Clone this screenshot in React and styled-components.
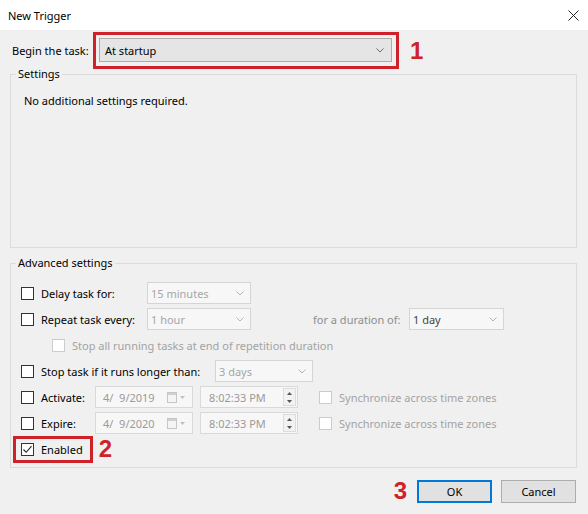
import styled, { createGlobalStyle } from 'styled-components';

const GlobalStyle = createGlobalStyle`
    body {
        margin: 0;
        font-family: 'Noto Sans', 'Open Sans', sans-serif;
        font-size: 11px;
        color: #000;
    }
`;

const RED = '#cf2128';

const Window = styled.div`
    width: 588px;
    height: 514px;
    background-color: #f0f0f0;
    display: flex;
    flex-direction: column;
    overflow: hidden;
`;

const TitleBar = styled.div`
    height: 30px;
    flex-shrink: 0;
    background-color: #fff;
    display: flex;
    align-items: center;
    justify-content: space-between;
    padding: 0 9px 0 8px;
    font-size: 11px;
`;

const Body = styled.div`
    flex: 1;
    display: flex;
    flex-direction: column;
    padding: 0 11px 0 10px;
`;

const BeginRow = styled.div`
    display: flex;
    align-items: center;
    margin-top: 2px;
    padding-left: 2px;
`;

const BeginLabel = styled.span`
    width: 81px;
`;

const RedBox = styled.div`
    display: flex;
    align-items: center;
    border: 3px solid ${RED};
    padding: ${(p) => p.$pad || '3px 4px 4px 3px'};
    margin-left: ${(p) => p.$shift || '0'};
    height: ${(p) => p.$height || 'auto'};
    box-sizing: border-box;
`;

const Marker = styled.span`
    color: ${RED};
    font-family: 'Liberation Sans', Arial, sans-serif;
    font-weight: bold;
    font-size: ${(p) => p.$size || '24px'};
    line-height: 1;
    margin-left: ${(p) => p.$left || '0'};
    margin-right: ${(p) => p.$right || '0'};
`;

const Select = styled.div`
    width: 293px;
    height: 24px;
    box-sizing: border-box;
    background-color: #e5e5e5;
    border: 1px solid #acacac;
    display: flex;
    align-items: center;
    justify-content: space-between;
    padding: 0 7px 0 5px;
`;

const Group = styled.fieldset`
    margin: ${(p) => p.$top || '0'} 0 0 0;
    padding: 0;
    border: 1px solid #dcdcdc;
    height: ${(p) => p.$height};
    box-sizing: border-box;
    min-width: 0;
`;

const Legend = styled.legend`
    margin-left: 5px;
    padding: 0 2px;
    line-height: 10px;
    font-size: 11px;
`;

const SettingsText = styled.div`
    padding: 15px 0 0 13px;
    line-height: 14px;
`;

const Rows = styled.div`
    display: flex;
    flex-direction: column;
    padding: 12px 0 0 10px;
`;

const Row = styled.div`
    display: flex;
    align-items: center;
    height: 26px;
    padding-left: ${(p) => p.$indent || '0'};
`;

const CheckLabel = styled.label`
    display: flex;
    align-items: center;
    gap: 7px;
    width: ${(p) => p.$width || 'auto'};
    color: ${(p) => (p.$disabled ? '#a3a3a3' : '#000')};
    flex-shrink: 0;
`;

const Box = styled.span`
    width: 13px;
    height: 13px;
    box-sizing: border-box;
    border: 1px solid ${(p) => (p.$disabled ? '#cccccc' : '#333')};
    background-color: #fff;
    display: flex;
    align-items: center;
    justify-content: center;
    flex-shrink: 0;
`;

const Combo = styled.div`
    width: ${(p) => p.$width};
    height: 22px;
    box-sizing: border-box;
    border: 1px solid #d5d5d5;
    background-color: #f7f7f7;
    display: flex;
    align-items: center;
    justify-content: space-between;
    padding: 0 6px 0 3px;
    color: ${(p) => (p.$dim ? '#a6a6a6' : '#444')};
    flex-shrink: 0;
`;

const GrayText = styled.span`
    color: #8d8d8d;
    width: ${(p) => p.$width || 'auto'};
    margin-left: ${(p) => p.$left || '0'};
    flex-shrink: 0;
`;

const DateBox = styled.div`
    width: 98px;
    height: 22px;
    box-sizing: border-box;
    border: 1px solid #d9d9d9;
    background-color: #f7f7f7;
    display: flex;
    align-items: center;
    justify-content: space-between;
    padding: 0 5px 0 7px;
    color: #9a9a9a;
    white-space: pre;
    margin-right: ${(p) => p.$right || '0'};
    flex-shrink: 0;
`;

const TimeBox = styled(DateBox)`
    padding: 0 1px 0 8px;
`;

const Spinner = styled.div`
    width: 13px;
    height: 18px;
    border: 1px solid #dcdcdc;
    box-sizing: border-box;
    display: flex;
    flex-direction: column;
    align-items: center;
    justify-content: space-around;
    background-color: #f2f2f2;
`;

const SyncLabel = styled(CheckLabel)`
    margin-left: 21px;
    color: #a3a3a3;
`;

const Footer = styled.div`
    display: flex;
    align-items: center;
    justify-content: flex-end;
    padding: 11px 1px 0 0;
`;

const Button = styled.button`
    width: 75px;
    height: 23px;
    box-sizing: border-box;
    background-color: #e1e1e1;
    border: ${(p) => (p.$primary ? '2px solid #0078d7' : '1px solid #adadad')};
    font-family: inherit;
    font-size: 11px;
    color: #000;
    padding: 0;
    margin-left: ${(p) => p.$left || '0'};
`;

const Chevron = ({ color = '#6b6b6b' }) => (
    <svg width="8" height="5" viewBox="0 0 8 5">
        <path d="M0.5 0.5 L4 4 L7.5 0.5" fill="none" stroke={color} strokeWidth="1" />
    </svg>
);

const CloseIcon = () => (
    <svg width="11" height="11" viewBox="0 0 11 11">
        <path d="M0.5 0.5 L10.5 10.5 M10.5 0.5 L0.5 10.5" stroke="#222" strokeWidth="1" />
    </svg>
);

const Tick = () => (
    <svg width="11" height="11" viewBox="0 0 11 11">
        <path d="M1.5 5.5 L4.2 8.3 L9.5 2.2" fill="none" stroke="#222" strokeWidth="1.1" />
    </svg>
);

const CalendarIcon = () => (
    <svg width="20" height="11" viewBox="0 0 20 11">
        <rect x="0.5" y="0.5" width="9" height="10" fill="#f4f4f4" stroke="#c6c6c6" />
        <rect x="1" y="1" width="8" height="2" fill="#d0d0d0" />
        <path d="M13 4 L18 4 L15.5 7 Z" fill="#c0c0c0" />
    </svg>
);

const SpinArrow = ({ up }) => (
    <svg width="5" height="3" viewBox="0 0 5 3">
        <path d={up ? 'M0 3 L2.5 0 L5 3 Z' : 'M0 0 L2.5 3 L5 0 Z'} fill="#555" />
    </svg>
);

function Check({ checked, disabled }) {
    return <Box $disabled={disabled}>{checked && <Tick />}</Box>;
}

function ComboBox({ width, value, dim }) {
    return (
        <Combo $width={width} $dim={dim}>
            <span>{value}</span>
            <Chevron color="#b5b5b5" />
        </Combo>
    );
}

function DateRow({ label, date }) {
    return (
        <Row>
            <CheckLabel $width="74px">
                <Check />
                {label}
            </CheckLabel>
            <DateBox $right="7px">
                <span>{date}</span>
                <CalendarIcon />
            </DateBox>
            <TimeBox>
                <span>8:02:33 PM</span>
                <Spinner>
                    <SpinArrow up />
                    <SpinArrow />
                </Spinner>
            </TimeBox>
            <SyncLabel>
                <Check disabled />
                Synchronize across time zones
            </SyncLabel>
        </Row>
    );
}

export default function App() {
    return (
        <>
            <GlobalStyle />
            <Window>
                <TitleBar>
                    <span>New Trigger</span>
                    <CloseIcon />
                </TitleBar>
                <Body>
                    <BeginRow>
                        <BeginLabel>Begin the task:</BeginLabel>
                        <RedBox>
                            <Select>
                                <span>At startup</span>
                                <Chevron />
                            </Select>
                        </RedBox>
                        <Marker $left="11px">1</Marker>
                    </BeginRow>

                    <Group $height="179px">
                        <Legend>Settings</Legend>
                        <SettingsText>No additional settings required.</SettingsText>
                    </Group>

                    <Group $height="210px" $top="10px">
                        <Legend>Advanced settings</Legend>
                        <Rows>
                            <Row>
                                <CheckLabel $width="126px">
                                    <Check />
                                    Delay task for:
                                </CheckLabel>
                                <ComboBox width="104px" value="15 minutes" dim />
                            </Row>
                            <Row>
                                <CheckLabel $width="126px">
                                    <Check />
                                    Repeat task every:
                                </CheckLabel>
                                <ComboBox width="104px" value="1 hour" dim />
                                <GrayText $left="62px" $width="96px">for a duration of:</GrayText>
                                <ComboBox width="95px" value="1 day" />
                            </Row>
                            <Row $indent="31px">
                                <CheckLabel $disabled>
                                    <Check disabled />
                                    Stop all running tasks at end of repetition duration
                                </CheckLabel>
                            </Row>
                            <Row>
                                <CheckLabel $width="194px">
                                    <Check />
                                    Stop task if it runs longer than:
                                </CheckLabel>
                                <ComboBox width="98px" value="3 days" dim />
                            </Row>
                            <DateRow label="Activate:" date="4/  9/2019" />
                            <DateRow label="Expire:" date="4/  9/2020" />
                            <Row>
                                <RedBox $pad="0 7px 0 5px" $shift="-8px" $height="27px">
                                    <CheckLabel>
                                        <Check checked />
                                        Enabled
                                    </CheckLabel>
                                </RedBox>
                                <Marker $left="6px">2</Marker>
                            </Row>
                        </Rows>
                    </Group>

                    <Footer>
                        <Marker $right="10px">3</Marker>
                        <Button $primary>OK</Button>
                        <Button $left="9px">Cancel</Button>
                    </Footer>
                </Body>
            </Window>
        </>
    );
}
